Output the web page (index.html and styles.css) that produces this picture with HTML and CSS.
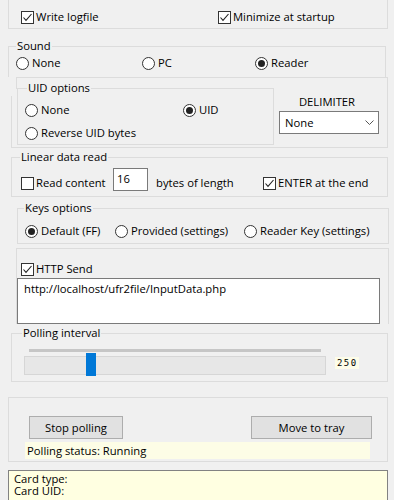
FILE: index.html
```html
<!DOCTYPE html>
<html>
<head>
<meta charset="utf-8">
<link rel="stylesheet" href="styles.css">
</head>
<body>
<div class="grp top">
  <div class="row">
    <div class="item chk-item w197"><svg class="ico" width="13" height="13" viewBox="0 0 13 13"><rect x=".5" y=".5" width="12" height="12" fill="#fff" stroke="#333"/><path d="M2.5 6.5L5 9.3L10.5 3" fill="none" stroke="#222" stroke-width="1.1"/></svg><span>Write logfile</span></div>
    <div class="item chk-item"><svg class="ico" width="13" height="13" viewBox="0 0 13 13"><rect x=".5" y=".5" width="12" height="12" fill="#fff" stroke="#333"/><path d="M2.5 6.5L5 9.3L10.5 3" fill="none" stroke="#222" stroke-width="1.1"/></svg><span>Minimize at startup</span></div>
  </div>
</div>

<div class="grp sound">
  <span class="title">Sound</span>
  <div class="row">
    <div class="item rad-item w126"><svg class="ico" width="13" height="13" viewBox="0 0 13 13"><circle cx="6.5" cy="6.5" r="6" fill="#fff" stroke="#333"/></svg><span>None</span></div>
    <div class="item rad-item w113"><svg class="ico" width="13" height="13" viewBox="0 0 13 13"><circle cx="6.5" cy="6.5" r="6" fill="#fff" stroke="#333"/></svg><span>PC</span></div>
    <div class="item rad-item"><svg class="ico" width="13" height="13" viewBox="0 0 13 13"><circle cx="6.5" cy="6.5" r="6" fill="#fff" stroke="#333"/><circle cx="6.5" cy="6.5" r="3.5" fill="#222"/></svg><span>Reader</span></div>
  </div>
</div>

<div class="wrap3">
  <div class="inner3">
    <div class="grp uid">
      <span class="title">UID options</span>
      <div class="row r1">
        <div class="item rad-item w158"><svg class="ico" width="13" height="13" viewBox="0 0 13 13"><circle cx="6.5" cy="6.5" r="6" fill="#fff" stroke="#333"/></svg><span>None</span></div>
        <div class="item rad-item"><svg class="ico" width="13" height="13" viewBox="0 0 13 13"><circle cx="6.5" cy="6.5" r="6" fill="#fff" stroke="#333"/><circle cx="6.5" cy="6.5" r="3.5" fill="#222"/></svg><span>UID</span></div>
      </div>
      <div class="row r2">
        <div class="item rad-item"><svg class="ico" width="13" height="13" viewBox="0 0 13 13"><circle cx="6.5" cy="6.5" r="6" fill="#fff" stroke="#333"/></svg><span>Reverse UID bytes</span></div>
      </div>
    </div>
    <div class="delim">
      <div class="delim-label">DELIMITER</div>
      <div class="combo"><span>None</span><svg width="9" height="5" viewBox="0 0 9 5"><path d="M0.5 0.5L4.5 4.5L8.5 0.5" fill="none" stroke="#555"/></svg></div>
    </div>
  </div>
</div>

<div class="grp linear">
  <span class="title">Linear data read</span>
  <div class="lrow">
    <div class="item chk-item w92 lab"><svg class="ico" width="13" height="13" viewBox="0 0 13 13"><rect x=".5" y=".5" width="12" height="12" fill="#fff" stroke="#333"/></svg><span>Read content</span></div>
    <div class="tbox">16</div>
    <div class="lab w107 bytes">bytes of length</div>
    <div class="item chk-item lab"><svg class="ico" width="13" height="13" viewBox="0 0 13 13"><rect x=".5" y=".5" width="12" height="12" fill="#fff" stroke="#333"/><path d="M2.5 6.5L5 9.3L10.5 3" fill="none" stroke="#222" stroke-width="1.1"/></svg><span>ENTER at the end</span></div>
  </div>
</div>

<div class="grp keys">
  <span class="title">Keys options</span>
  <div class="row">
    <div class="item rad-item w90"><svg class="ico" width="13" height="13" viewBox="0 0 13 13"><circle cx="6.5" cy="6.5" r="6" fill="#fff" stroke="#333"/><circle cx="6.5" cy="6.5" r="3.5" fill="#222"/></svg><span>Default (FF)</span></div>
    <div class="item rad-item w129"><svg class="ico" width="13" height="13" viewBox="0 0 13 13"><circle cx="6.5" cy="6.5" r="6" fill="#fff" stroke="#333"/></svg><span>Provided (settings)</span></div>
    <div class="item rad-item"><svg class="ico" width="13" height="13" viewBox="0 0 13 13"><circle cx="6.5" cy="6.5" r="6" fill="#fff" stroke="#333"/></svg><span>Reader Key (settings)</span></div>
  </div>
</div>

<div class="grp http">
  <div class="row hrow">
    <div class="item chk-item"><svg class="ico" width="13" height="13" viewBox="0 0 13 13"><rect x=".5" y=".5" width="12" height="12" fill="#fff" stroke="#333"/><path d="M2.5 6.5L5 9.3L10.5 3" fill="none" stroke="#222" stroke-width="1.1"/></svg><span>HTTP Send</span></div>
  </div>
  <div class="mtext">http://localhost/ufr2file/InputData.php</div>
</div>

<div class="grp poll">
  <span class="title">Polling interval</span>
  <div class="prow">
    <div class="slider">
      <div class="channel"></div>
      <div class="track"></div>
      <div class="thumb"></div>
    </div>
    <div class="val">250</div>
  </div>
</div>

<div class="grp btns">
  <div class="brow">
    <div class="btn b-stop">Stop polling</div>
    <div class="btn b-tray">Move to tray</div>
  </div>
  <div class="status">Polling status: Running</div>
</div>

<div class="card">
  <div>Card type:</div>
  <div>Card UID:</div>
</div>
</body>
</html>
```

FILE: styles.css
```css
* { box-sizing: border-box; }
html, body { margin: 0; padding: 0; }
body {
  width: 394px;
  height: 500px;
  overflow: hidden;
  background: #f0f0f0;
  color: #000;
  font-family: "Open Sans", "Noto Sans", sans-serif;
  font-size: 11.25px;
  line-height: 16px;
}
.grp { border: 1px solid #dcdcdc; }
.title {
  display: block;
  width: max-content;
  margin-top: -9px;
  padding: 0 1px;
  background: #f0f0f0;
  line-height: 16px;
}
.row { display: flex; align-items: center; height: 16px; }
.item { display: flex; align-items: center; height: 16px; white-space: nowrap; flex: none; }
.chk-item { gap: 2px; }
.rad-item { gap: 3px; }
.ico { display: block; flex: none; }
.w197 { width: 197px; }
.w126 { width: 126px; }
.w113 { width: 113px; }
.w158 { width: 158px; }
.w92 { width: 92px; }
.w107 { width: 107px; }
.w90 { width: 90px; }
.w129 { width: 129px; }

/* top group */
.top {
  margin: 0 6px 0 8px;
  border-top: none;
  height: 29px;
  padding: 9px 0 0 12px;
}

/* sound */
.sound {
  margin: 17px 8px 0 8px;
  border-bottom: none;
  height: 31px;
  padding-left: 7px;
}
.sound .row { margin-top: 1px; }

/* uid + delimiter */
.wrap3 {
  margin: 0 6px 0 11px;
  height: 71px;
  border-bottom: 1px solid #dcdcdc;
  border-right: 1px solid #dcdcdc;
  padding-left: 5px;
  background: linear-gradient(#dcdcdc, #dcdcdc) no-repeat 0 19px / 1px 51px;
}
.inner3 {
  display: flex;
  align-items: flex-start;
  height: 70px;
  border-top: 1px solid #dcdcdc;
  background: linear-gradient(#dcdcdc, #dcdcdc) no-repeat 0 0 / 1px 11px;
}
.uid {
  margin: 10px 0 0 1px;
  width: 257px;
  height: 57px;
  padding-left: 7px;
}
.uid .title { margin-left: 2px; }
.uid .r1 { margin-top: 6px; }
.uid .r2 { margin-top: 7px; }
.delim {
  margin: 16px 0 0 5px;
  width: 100px;
}
.delim-label { text-align: center; padding-right: 4px; line-height: 16px; }
.combo {
  margin-top: 1px;
  height: 23px;
  background: #fff;
  border: 1px solid #7a7a7a;
  display: flex;
  align-items: center;
  justify-content: space-between;
  padding: 0 4px 0 5px;
}
.combo svg { display: block; }

/* linear data read */
.linear {
  margin: 9px 6px 0 11px;
  height: 40px;
  padding-left: 9px;
}
.linear .title { margin-left: -1px; }
.lrow {
  display: flex;
  align-items: flex-start;
  margin-top: 3px;
}
.lab { margin-top: 7px; height: 16px; line-height: 16px; white-space: nowrap; }
.tbox {
  width: 35px;
  height: 23px;
  background: #fff;
  border: 1px solid #7a7a7a;
  padding: 2px 0 0 3px;
  line-height: 16px;
  flex: none;
}
.bytes { margin-left: 8px; }

/* keys */
.keys {
  margin: 11px 5px 0 17px;
  height: 36px;
  padding-left: 7px;
}
.keys .title { margin-left: -1px; }
.keys .row { margin-top: 7px; }

/* http */
.http {
  margin: 4px 5px 0 16px;
  border-bottom: none;
  height: 76px;
}
.hrow { margin-top: 12px; padding-left: 4px; }
.mtext {
  margin-top: 1px;
  width: 363px;
  height: 46px;
  background: #fff;
  border: 1px solid #7a7a7a;
  padding: 2px 6px;
  white-space: nowrap;
}

/* polling interval */
.poll {
  margin: 9px 6px 0 11px;
  height: 49px;
}
.poll .title { margin-left: 10px; }
.prow { display: flex; align-items: flex-start; }
.slider {
  position: relative;
  margin-left: 12px;
  width: 302px;
  flex: none;
}
.channel {
  margin: 8px 5px 0 5px;
  height: 3px;
  background: #c6c6c6;
}
.track {
  margin-top: 4px;
  height: 19px;
  background: #e7e7e7;
  border: 1px solid #d6d6d6;
}
.thumb {
  position: absolute;
  left: 62px;
  top: 12px;
  width: 10px;
  height: 23px;
  background: #0078d7;
}
.val {
  margin: 16px 0 0 9px;
  width: 24px;
  height: 12px;
  background: #fdfde8;
  font-family: "DejaVu Sans Mono", monospace;
  font-size: 9px;
  line-height: 12px;
  letter-spacing: 1.4px;
  padding-left: 2px;
}

/* buttons */
.btns {
  margin: 15px 6px 0 8px;
  height: 65px;
}
.brow {
  display: flex;
  margin-top: 18px;
  padding-left: 20px;
}
.btn {
  height: 23px;
  background: #e1e1e1;
  border: 1px solid #adadad;
  display: flex;
  align-items: center;
  justify-content: center;
  flex: none;
}
.b-stop { width: 94px; }
.b-tray { width: 121px; margin-left: 128px; }
.status {
  margin: 3px 0 0 16px;
  width: 345px;
  height: 17px;
  background: #fdfde6;
  padding-left: 2px;
  line-height: 17px;
}

/* card */
.card {
  margin: 8px 6px 0 8px;
  height: 40px;
  border: 1px solid #828282;
  background: #ffffe1;
  padding: 2px 5px;
  line-height: 12px;
}
```
